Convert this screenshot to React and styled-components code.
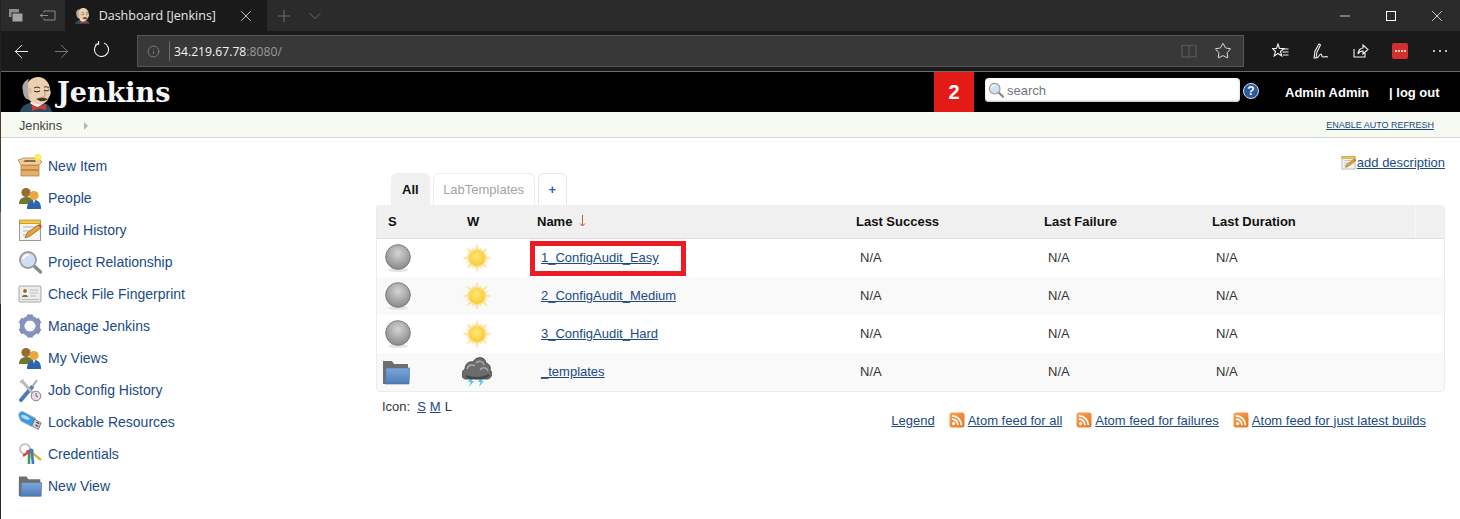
import React from "react";
import styled, { createGlobalStyle } from "styled-components";
import { ArrowLeft, ArrowRight, Info, Star, Plus, ChevronDown, X, Minus } from "lucide-react";

const GlobalStyle = createGlobalStyle`
  html, body { margin: 0; padding: 0; background: #fff; }
  body { font-family: "Liberation Sans", Arial, sans-serif; font-size: 13px; color: #333; }
`;

const Page = styled.div`
  width: 1460px;
  height: 519px;
  overflow: hidden;
  position: relative;
  background: #fff;
`;
// sliver of the desktop showing past the window's left edge
const WindowEdge = styled.div`
  position: absolute;
  left: 0;
  top: 0;
  bottom: 0;
  width: 1px;
  background: linear-gradient(
    to bottom,
    #222 0 72px,
    #4a3a2a 72px 177px,
    #1d4a70 177px 212px,
    #777 212px 304px,
    #2a2a2a 304px
  );
`;

// browser chrome
const TabStrip = styled.div`
  height: 31px;
  display: flex;
  align-items: stretch;
  background: #2b2b2b;
  color: #fff;
`;
const StripButton = styled.div`
  width: ${(p) => p.$w || 32}px;
  display: flex;
  align-items: center;
  justify-content: center;
  color: ${(p) => p.$color || "#fff"};
`;
const ActiveTab = styled.div`
  width: 202px;
  margin-left: 1px;
  background: #1a1a1a;
  display: flex;
  align-items: center;
  padding: 0 12px 0 10px;
  box-sizing: border-box;
  font: 12.5px "Open Sans", "Noto Sans", sans-serif;
  color: #e8e8e8;
`;
const TabTitle = styled.span`
  flex: 1;
  margin-left: 9px;
`;
const StripSpacer = styled.div`
  flex: 1;
`;
const Toolbar = styled.div`
  height: 40px;
  background: #1a1a1a;
  border-bottom: 1px solid #6a6a6a;
  display: flex;
  align-items: center;
`;
const NavButton = styled.div`
  width: 40px;
  display: flex;
  justify-content: center;
  color: ${(p) => p.$color || "#f2f2f2"};
`;
const NavGroup = styled.div`
  width: 137px;
  display: flex;
  padding-left: 1px;
  box-sizing: border-box;
`;
const AddressBar = styled.div`
  width: 1107px;
  height: 32px;
  box-sizing: border-box;
  background: #383838;
  border: 1px solid #565656;
  display: flex;
  align-items: center;
  font: 12.2px "Open Sans", "Noto Sans", sans-serif;
  color: #f4f4f4;
`;
const AddressInfo = styled.div`
  width: 31px;
  height: 20px;
  display: flex;
  align-items: center;
  justify-content: center;
  color: #9a9a9a;
  border-right: 1px solid #6a6a6a;
  margin-right: 4px;
`;
const PortText = styled.span`
  color: #9a9a9a;
`;
const AddressEnd = styled.div`
  margin-left: auto;
  display: flex;
  align-items: center;
  gap: 17px;
  padding-right: 11px;
`;
const ToolIcons = styled.div`
  flex: 1;
  display: flex;
  align-items: center;
  justify-content: space-between;
  padding: 0 12px 0 28px;
`;
const LastPass = styled.div`
  width: 16px;
  height: 16px;
  background: #d32f2f;
  border-radius: 2px;
  display: flex;
  align-items: center;
  justify-content: center;
  gap: 1px;
`;
const LastPassDot = styled.span`
  width: 2px;
  height: 2px;
  background: #fff;
  border-radius: 50%;
`;

// jenkins header
const Header = styled.header`
  height: 40px;
  background: #000;
  display: flex;
  align-items: stretch;
`;
const Brand = styled.div`
  width: 934px;
  display: flex;
  align-items: flex-end;
  padding-left: 20px;
  box-sizing: border-box;
`;
const Wordmark = styled.span`
  font: bold 27px "DejaVu Serif", serif;
  color: #f7f7f7;
  margin-left: 5px;
  align-self: center;
`;
const Badge = styled.div`
  width: 40px;
  background: #e31b17;
  color: #fff;
  font: bold 20px "Liberation Sans", sans-serif;
  display: flex;
  align-items: center;
  justify-content: center;
`;
const SearchBox = styled.div`
  width: 255px;
  height: 24px;
  margin: 6px 3px 0 11px;
  background: #fff;
  border-radius: 4px;
  box-shadow: inset 0 -1px 2px #bbb;
  display: flex;
  align-items: center;
  padding-left: 3px;
  box-sizing: border-box;
  font-size: 13px;
  color: #6f7680;
  gap: 3px;
`;
const HelpBubble = styled.div`
  width: 16px;
  height: 16px;
  margin-top: 11px;
  border-radius: 50%;
  background: #2d5a9e;
  border: 1px solid #cfe0f2;
  box-sizing: border-box;
  color: #fff;
  font: bold 12px/14px "Liberation Sans", sans-serif;
  text-align: center;
`;
const UserName = styled.span`
  margin-left: 26px;
  font: bold 13px/42px "Liberation Sans", sans-serif;
  color: #fff;
`;
const LogOut = styled.span`
  margin-left: 20px;
  font: bold 13px/42px "Liberation Sans", sans-serif;
  color: #fff;
`;

// breadcrumb
const Breadcrumbs = styled.div`
  height: 23px;
  background: #f6faf2;
  border-bottom: 1px solid #d3d7cf;
  display: flex;
  align-items: center;
  padding: 2px 26px 0 19px;
  font-size: 12.7px;
  color: #444;
`;
const CrumbArrow = styled.span`
  width: 0;
  height: 0;
  margin-left: 22px;
  border-left: 4px solid #b5b5b5;
  border-top: 4px solid transparent;
  border-bottom: 4px solid transparent;
`;
const AutoRefresh = styled.a`
  margin-left: auto;
  font-size: 9px;
  color: #204a87;
  text-decoration: underline;
  margin-bottom: 2px;
`;

// page body
const Body = styled.div`
  display: flex;
  align-items: flex-start;
`;
const Sidebar = styled.nav`
  width: 376px;
  padding: 12px 0 0 18px;
  box-sizing: border-box;
`;
const SideItem = styled.div`
  height: 32px;
  display: flex;
  align-items: center;
  gap: 6px;
  color: #204a87;
  font-size: 14px;
`;
const Main = styled.main`
  flex: 1;
  padding-right: 15px;
`;
const DescriptionRow = styled.div`
  height: 35px;
  padding-top: 13px;
  box-sizing: border-box;
  display: flex;
  justify-content: flex-end;
  align-items: center;
  gap: 1px;
`;
const Link = styled.a`
  color: #204a87;
  text-decoration: underline;
  font-size: 13px;
`;
const TabRow = styled.div`
  display: flex;
  gap: 3px;
  padding-left: 15px;
  height: 32px;
`;
const ViewTab = styled.div`
  height: 32px;
  box-sizing: border-box;
  padding: 0 ${(p) => p.$pad}px;
  display: flex;
  align-items: center;
  border-radius: 6px 6px 0 0;
  font-size: 13px;
  border: 1px solid ${(p) => p.$border};
  border-bottom: none;
  background: ${(p) => p.$bg || "#fff"};
  color: ${(p) => p.$color};
  font-weight: ${(p) => (p.$bold ? "bold" : "normal")};
`;
const Table = styled.div`
  position: relative;
  border: 1px solid #ececec;
  border-top: none;
  border-radius: 4px;
  height: 187px;
  box-sizing: border-box;
`;
const Row = styled.div`
  display: grid;
  grid-template-columns: 81px 75px 319px 188px 168px 207px 1fr;
  align-items: center;
  height: ${(p) => p.$h || 38}px;
  background: ${(p) => p.$bg};
  box-sizing: border-box;
  border-bottom: ${(p) => (p.$line ? "1px solid #dcdcdc" : "none")};
`;
const HeadCell = styled.div`
  font-weight: bold;
  font-size: 13px;
  color: #111;
  padding-left: ${(p) => p.$pad}px;
  display: flex;
  align-items: center;
  gap: 7px;
  margin-top: -1px;
`;
const HeadDivider = styled.div`
  height: 33px;
  border-left: 1px solid #f7f7f7;
`;
const Cell = styled.div`
  padding-left: ${(p) => p.$pad || 8}px;
  display: flex;
  align-items: center;
  color: #333;
  margin-top: -1px;
`;
const Highlight = styled.div`
  position: absolute;
  left: 153px;
  top: 36px;
  width: 156px;
  height: 35px;
  box-sizing: border-box;
  border: 5px solid #ed1c24;
`;
const BelowTable = styled.div`
  display: flex;
  justify-content: space-between;
  padding: 7px 19px 0 6px;
`;
const IconSizes = styled.div`
  font-size: 13px;
  display: flex;
  gap: 4px;
`;
const IconLabel = styled.span`
  margin-right: 3px;
`;
const Feeds = styled.div`
  display: flex;
  align-items: center;
  gap: 14px;
  padding-top: 13px;
`;
const Feed = styled.span`
  display: flex;
  align-items: center;
  gap: 3px;
`;

/* ---- drawings ---- */
const Butler = ({ size = 35 }) => (
  <svg width={(size * 32) / 35} height={size} viewBox="0 0 32 35" style={{ display: "block" }}>
    <path d="M0 35 C1 29 6 27 10 26 L24 26 C28 27 31 30 32 35Z" fill="#2d4a5f" />
    <path d="M10 26 L17 31 L24 26 L22 24 L12 24Z" fill="#eee" />
    <path d="M12 28 L18 30 L26 27 L26 33 L18 31.5 L12 34Z" fill="#d33833" />
    <path d="M6 14 C5 5 12 0 18 0 C25 0 30 6 30 13 C31 14 31 18 29 20 C27 26 22 28 17 27 C11 27 7 21 6 14Z" fill="#eccfae" />
    <path d="M3 14 C1 8 5 3 9 2 C7 6 9 9 8 13 C8 17 9 20 10 23 C6 23 3 19 3 14Z" fill="#a8a8a8" />
    <ellipse cx="9.5" cy="14" rx="2" ry="3" fill="#e0b998" />
    <path d="M14 11 Q17 9 20 11 M24 10 Q27 9 29 11" stroke="#4a3520" strokeWidth="1" fill="none" />
    <path d="M14 14 Q17 16 20 14 M24 13 Q27 15 29 13" stroke="#222" strokeWidth="1" fill="none" />
    <path d="M24 14 Q27 19 23 20" stroke="#bd9470" strokeWidth="1" fill="none" />
    <path d="M16 22 Q22 19 28 22 Q24 25 20 24Z" fill="#4a3520" />
  </svg>
);
const Sun = () => (
  <svg width="30" height="30" viewBox="0 0 30 30">
    <defs>
      <radialGradient id="sunFill" cx="45%" cy="40%" r="60%">
        <stop offset="0" stopColor="#ffe97a" />
        <stop offset="1" stopColor="#fac72e" />
      </radialGradient>
    </defs>
    {[0, 45, 90, 135, 180, 225, 270, 315, 22.5, 67.5, 112.5, 157.5, 202.5, 247.5, 292.5, 337.5].map((a, i) => (
      <path key={a} d={i < 8 ? "M12.8 7 L15 0 L17.2 7Z" : "M13.4 7 L15 3 L16.6 7Z"} fill="#fde3a8" transform={`rotate(${a} 15 15)`} />
    ))}
    <circle cx="15" cy="15" r="8.5" fill="url(#sunFill)" stroke="#f9e39c" strokeWidth="1" />
  </svg>
);
const Ball = () => (
  <svg width="28" height="30" viewBox="0 0 28 30">
    <defs>
      <radialGradient id="ballFill" cx="50%" cy="35%" r="60%">
        <stop offset="0" stopColor="#d4d4d4" />
        <stop offset="1" stopColor="#8f8f8f" />
      </radialGradient>
    </defs>
    <ellipse cx="14" cy="27" rx="10" ry="2" fill="#e4e4e4" />
    <circle cx="14" cy="14" r="12.3" fill="url(#ballFill)" stroke="#7c7c7c" strokeWidth="1" />
  </svg>
);
const Folder = ({ size = 28 }) => (
  <svg width={size} height={size} viewBox="0 0 28 28">
    <defs>
      <linearGradient id="folderFill" x1="0" y1="0" x2="0" y2="1">
        <stop offset="0" stopColor="#7da7d9" />
        <stop offset="1" stopColor="#4d7cb8" />
      </linearGradient>
    </defs>
    <path d="M1 3 L10 3 L12 6 L26 6 L26 26 L1 26Z" fill="#6f6f6f" />
    <path d="M4 10 L28 10 L27 26 L3 26Z" fill="url(#folderFill)" stroke="#4a6f9f" strokeWidth="0.6" />
  </svg>
);
const Storm = () => (
  <svg width="30" height="30" viewBox="0 0 30 30">
    <path d="M9 20 L6 25 L8.5 25 L7 30 L12 24 L9.5 24 L12 20Z" fill="#5ac8ee" />
    <path d="M19 20 L16 25 L18.5 25 L17 30 L22 24 L19.5 24 L22 20Z" fill="#5ac8ee" />
    <path d="M3 22 C-1 21 -1 14 3 12 C3 6 8 4 11 5 C14 -1 23 -1 24 6 C28 7 29 11 28 13 C31 15 30 21 26 22Z" fill="#6a6c6e" stroke="#3d3f41" strokeWidth="0.8" />
    <path d="M5 12 C6 8 10 7 13 9 M14 6 C17 3 21 4 22 8 M18 13 C20 10 25 10 26 14" stroke="#a9abad" strokeWidth="1.5" fill="none" />
    <path d="M4 19 C10 22 21 22 27 18" stroke="#44464a" strokeWidth="2.4" fill="none" />
  </svg>
);
const Rss = () => (
  <svg width="16" height="16" viewBox="0 0 16 16">
    <defs>
      <linearGradient id="rssFill" x1="0" y1="0" x2="1" y2="1">
        <stop offset="0" stopColor="#f7a65a" />
        <stop offset="1" stopColor="#e8711c" />
      </linearGradient>
    </defs>
    <rect x="0.5" y="0.5" width="15" height="15" rx="2.5" fill="url(#rssFill)" />
    <circle cx="4.6" cy="11.6" r="1.6" fill="#fff" />
    <path d="M3 7.2 A6 6 0 0 1 9 13.2 M3 3.8 A9.4 9.4 0 0 1 12.4 13.2" stroke="#fff" strokeWidth="1.8" fill="none" />
  </svg>
);
const NotePencil = ({ size = 15 }) => (
  <svg width={size} height={size} viewBox="0 0 24 24">
    <rect x="1.5" y="3" width="21" height="19.5" fill="#f4f4f0" stroke="#9a9a9a" />
    <rect x="1.5" y="2" width="21" height="3.5" fill="#f2c84b" stroke="#b99227" strokeWidth="0.8" />
    <path d="M5 9 H19 M5 13 H13 M5 17 H10" stroke="#b0b0b0" strokeWidth="1.2" />
    <path d="M7 20 L9 15 L20 7 L23 10 L12 18Z" fill="#e5a33a" stroke="#7a5b1e" strokeWidth="0.7" />
    <path d="M20 7 L23 10 L24 8 L22 6Z" fill="#d9453a" />
  </svg>
);
const Magnifier = ({ size = 24 }) => (
  <svg width={size} height={size} viewBox="0 0 24 24">
    <path d="M15 15 L22.5 22" stroke="#8b8b8b" strokeWidth="3.4" strokeLinecap="round" />
    <circle cx="10" cy="10" r="8" fill="#cfe0f2" stroke="#9c9c9c" strokeWidth="1.8" />
    <path d="M5 9 A5 5 0 0 1 11 5" stroke="#fff" strokeWidth="1.6" fill="none" />
  </svg>
);
const NewItemIcon = () => (
  <svg width="24" height="24" viewBox="0 0 24 24">
    <path d="M3 11 L21 11 L21 22 L3 22Z" fill="#e3b06c" stroke="#a9783c" strokeWidth="0.7" />
    <path d="M3 11 L0 6 L6 4 L20 4 L24 8 L21 11Z" fill="#f0cf9c" stroke="#a9783c" strokeWidth="0.7" />
    <path d="M5 8 L18 8 L17 6 L7 6Z" fill="#8b6b3f" />
    <rect x="3" y="15" width="18" height="2" fill="#c48a47" />
    <circle cx="20" cy="3.2" r="3" fill="#fff25c" stroke="#f0dc35" strokeWidth="0.6" />
  </svg>
);
const PeopleIcon = () => (
  <svg width="24" height="24" viewBox="0 0 24 24">
    <path d="M1 18 C1 12 5 11 9 11 C14 11 15 14 15 18Z" fill="#6d7a2e" />
    <circle cx="8" cy="6.5" r="4.6" fill="#9c6a2b" />
    <path d="M9 23 C9 16 12 14 16 14 C20 14 23 16 23 23Z" fill="#2e65a6" />
    <path d="M15 14 L16 18 L17 14Z" fill="#fff" />
    <circle cx="16" cy="9.5" r="4.6" fill="#eca53e" />
  </svg>
);
const Fingerprint = () => (
  <svg width="24" height="24" viewBox="0 0 24 24">
    <rect x="1" y="4" width="22" height="16" rx="1" fill="#ececec" stroke="#a7a7a7" />
    <rect x="4" y="7" width="6" height="8" fill="#fbfbf4" />
    <circle cx="7" cy="9" r="2" fill="#9c6a2b" />
    <path d="M4 15 C4 12 10 12 10 15Z" fill="#6d7a2e" />
    <path d="M12 8 H20 M12 11 H20 M12 14 H18 M3 17.5 H21" stroke="#b6b6b6" strokeWidth="0.9" />
  </svg>
);
const Gear = () => (
  <svg width="24" height="24" viewBox="0 0 24 24">
    {[0, 60, 120, 180, 240, 300].map((a) => (
      <rect key={a} x="9.2" y="0.5" width="5.6" height="6" fill="#7b8ab5" transform={`rotate(${a} 12 12)`} />
    ))}
    <circle cx="12" cy="12" r="8" fill="none" stroke="#8593bd" strokeWidth="4.6" />
  </svg>
);
const Tools = () => (
  <svg width="24" height="24" viewBox="0 0 24 24">
    <path d="M3 22 L14 9" stroke="#4c7cb3" strokeWidth="4" strokeLinecap="round" />
    <path d="M19 2 L14 9" stroke="#a7a7a7" strokeWidth="2" />
    <path d="M4 3 L19 20" stroke="#b7b7b7" strokeWidth="2.8" />
    <path d="M6 1 A4 4 0 0 0 2 6 L4 3.5Z" fill="#b7b7b7" />
    <circle cx="18" cy="18" r="4.8" fill="#e7ddea" stroke="#8c7f8f" />
    <path d="M18 15 V18 L20 19" stroke="#6b5f6e" fill="none" />
  </svg>
);
const UsbStick = () => (
  <svg width="24" height="24" viewBox="0 0 26 24">
    <path d="M1 6 C0 2 3 0 6 1 L19 8 L15 17 L3 11Z" fill="#3e9ae0" stroke="#a9b7c4" />
    <ellipse cx="8" cy="7" rx="5" ry="2" fill="#a8dcf8" transform="rotate(25 8 7)" />
    <path d="M18 9 L25 13 L22 20 L15 16Z" fill="#d5d5d5" stroke="#555" strokeWidth="0.8" />
    <path d="M20 12 L23 14 M19 15 L22 17" stroke="#333" strokeWidth="1.2" />
  </svg>
);
const KeysIcon = () => (
  <svg width="24" height="24" viewBox="0 0 24 24">
    <circle cx="7" cy="7" r="5" fill="none" stroke="#b9b9b9" strokeWidth="1.6" />
    <path d="M11 11 L16 20" stroke="#e5c44f" strokeWidth="2.4" />
    <path d="M12 9 L23 18" stroke="#d9b23a" strokeWidth="2.4" />
    <path d="M9 11 L5 14" stroke="#d9453a" strokeWidth="2.4" />
    <path d="M11 11 L11 22" stroke="#3f9e58" strokeWidth="2.6" />
    <path d="M14 10 L15 22" stroke="#3f7fc1" strokeWidth="2.6" />
    <circle cx="13" cy="9" r="2.6" fill="#3f7fc1" />
    <circle cx="10" cy="10" r="2" fill="#d9453a" />
  </svg>
);
const SortArrow = () => (
  <svg width="7" height="12" viewBox="0 0 7 12" fill="none" stroke="#c0603a" strokeWidth="1">
    <path d="M3.5 0 V11 M1 8.5 L3.5 11 L6 8.5" />
  </svg>
);
const WinIcon = ({ children }) => (
  <svg width="16" height="16" viewBox="0 0 16 16" fill="none" stroke="currentColor" strokeWidth="1">{children}</svg>
);

const sideItems = [
  ["New Item", <NewItemIcon />],
  ["People", <PeopleIcon />],
  ["Build History", <NotePencil size={24} />],
  ["Project Relationship", <Magnifier />],
  ["Check File Fingerprint", <Fingerprint />],
  ["Manage Jenkins", <Gear />],
  ["My Views", <PeopleIcon />],
  ["Job Config History", <Tools />],
  ["Lockable Resources", <UsbStick />],
  ["Credentials", <KeysIcon />],
  ["New View", <Folder size={24} />],
];

const jobs = [
  { name: "1_ConfigAudit_Easy", status: <Ball />, pad: 7, weather: <Sun />, bg: "#fff" },
  { name: "2_ConfigAudit_Medium", status: <Ball />, pad: 7, weather: <Sun />, bg: "#f9f9f9" },
  { name: "3_ConfigAudit_Hard", status: <Ball />, pad: 7, weather: <Sun />, bg: "#fff" },
  { name: "_templates", status: <Folder />, pad: 5, weather: <Storm />, bg: "#f9f9f9" },
];

export default function App() {
  return (
    <Page>
      <GlobalStyle />
      <TabStrip>
        <StripButton>
          <WinIcon>
            <rect x="1" y="1" width="10" height="8" fill="#8d8d8d" stroke="none" />
            <rect x="4" y="5" width="11" height="9" fill="#a4a4a4" stroke="#2b2b2b" />
          </WinIcon>
        </StripButton>
        <StripButton $color="#8d8d8d">
          <WinIcon>
            <path d="M4 4.5 V3 H15 V12 H4 V10.5 M0 7.5 H8 M2.5 5.5 L0.5 7.5 L2.5 9.5" />
          </WinIcon>
        </StripButton>
        <ActiveTab>
          <Butler size={16} />
          <TabTitle>Dashboard [Jenkins]</TabTitle>
          <X size={18} strokeWidth={1.1} />
        </ActiveTab>
        <StripButton $w={34} $color="#7a7a7a"><Plus size={20} strokeWidth={1} /></StripButton>
        <StripButton $w={28} $color="#7a7a7a"><ChevronDown size={20} strokeWidth={1} /></StripButton>
        <StripSpacer />
        <StripButton $w={46}><Minus size={16} strokeWidth={1.1} /></StripButton>
        <StripButton $w={46}>
          <svg width="10" height="10" viewBox="0 0 10 10" fill="none" stroke="#fff"><rect x="0.5" y="0.5" width="9" height="9" /></svg>
        </StripButton>
        <StripButton $w={46}><X size={18} strokeWidth={1} /></StripButton>
      </TabStrip>
      <Toolbar>
        <NavGroup>
          <NavButton><ArrowLeft size={21} strokeWidth={1.1} /></NavButton>
          <NavButton $color="#7a7a7a"><ArrowRight size={21} strokeWidth={1.1} /></NavButton>
          <NavButton>
            <svg width="16" height="16" viewBox="0 0 16 16" fill="none" stroke="#f2f2f2" strokeWidth="1.1">
              <path d="M5.5 2.2 A7 7 0 1 0 11 2 M5.6 0 V3.2 H2.4" />
            </svg>
          </NavButton>
        </NavGroup>
        <AddressBar>
          <AddressInfo><Info size={13} strokeWidth={1.2} /></AddressInfo>
          34.219.67.78<PortText>:8080/</PortText>
          <AddressEnd>
            <svg width="16" height="15" viewBox="0 0 16 15" fill="none" stroke="#5f5f5f" strokeWidth="1">
              <path d="M8 2 C6 1 3 1 1 1.5 V13 C3 12.5 6 12.5 8 13.5 C10 12.5 13 12.5 15 13 V1.5 C13 1 10 1 8 2Z M8 2 V13.5" />
            </svg>
            <Star size={18} strokeWidth={1.2} color="#f2f2f2" />
          </AddressEnd>
        </AddressBar>
        <ToolIcons>
          <svg width="17" height="16" viewBox="0 0 17 16" fill="none" stroke="#f2f2f2" strokeWidth="1.1">
            <path d="M6 1 L7.5 5.5 L12 5.5 L8.5 8.5 L9.8 13 L6 10.5 L2.2 13 L3.5 8.5 L0.5 5.5 L4.5 5.5Z" />
            <path d="M10 6 H16.5 M10.5 9 H16.5 M11 12 H16.5" />
          </svg>
          <svg width="16" height="16" viewBox="0 0 16 16" fill="none" stroke="#f2f2f2" strokeWidth="1.1">
            <path d="M1 15 L2 8 L6 1 L7.5 2 L4 9 L3 15Z M3 15 C6 15 6 11 8 11 C9 11 8 14 10 14 C12 14 12 13 15 14" />
          </svg>
          <svg width="16" height="16" viewBox="0 0 16 16" fill="none" stroke="#f2f2f2" strokeWidth="1.1">
            <path d="M1 6 V14 H12 V10 M5 11 C5 7 8 5 10 5 V2 L15 6.5 L10 11 V8 C8 8 6 9 5 11Z" />
          </svg>
          <LastPass>
            <LastPassDot /><LastPassDot /><LastPassDot /><LastPassDot />
          </LastPass>
          <svg width="16" height="4" viewBox="0 0 16 4" fill="#f2f2f2">
            <circle cx="2" cy="2" r="1" /><circle cx="8" cy="2" r="1" /><circle cx="14" cy="2" r="1" />
          </svg>
        </ToolIcons>
      </Toolbar>

      <Header>
        <Brand>
          <Butler size={35} />
          <Wordmark>Jenkins</Wordmark>
        </Brand>
        <Badge>2</Badge>
        <SearchBox>
          <Magnifier size={16} />
          search
        </SearchBox>
        <HelpBubble>?</HelpBubble>
        <UserName>Admin Admin</UserName>
        <LogOut>| log out</LogOut>
      </Header>
      <Breadcrumbs>
        Jenkins
        <CrumbArrow />
        <AutoRefresh>ENABLE AUTO REFRESH</AutoRefresh>
      </Breadcrumbs>

      <Body>
        <Sidebar>
          {sideItems.map(([label, icon]) => (
            <SideItem key={label}>
              {icon}
              {label}
            </SideItem>
          ))}
        </Sidebar>
        <Main>
          <DescriptionRow>
            <NotePencil />
            <Link>add description</Link>
          </DescriptionRow>
          <TabRow>
            <ViewTab $pad={10} $bg="#f0f0f0" $border="#f0f0f0" $color="#111" $bold>All</ViewTab>
            <ViewTab $pad={9.5} $border="#eeeeee" $color="#a3a3a3">LabTemplates</ViewTab>
            <ViewTab $pad={10} $border="#dbe9f7" $color="#2a62c4" $bold>+</ViewTab>
          </TabRow>
          <Table>
            <Row $h={34} $bg="#f0f0f0" $line>
              <HeadCell $pad={11}>S</HeadCell>
              <HeadCell $pad={9}>W</HeadCell>
              <HeadCell $pad={4}>Name <SortArrow /></HeadCell>
              <HeadCell $pad={4}>Last Success</HeadCell>
              <HeadCell $pad={4}>Last Failure</HeadCell>
              <HeadCell $pad={4}>Last Duration</HeadCell>
              <HeadDivider />
            </Row>
            {jobs.map((job) => (
              <Row key={job.name} $bg={job.bg}>
                <Cell $pad={job.pad}>{job.status}</Cell>
                <Cell $pad={4}>{job.weather}</Cell>
                <Cell><Link>{job.name}</Link></Cell>
                <Cell>N/A</Cell>
                <Cell>N/A</Cell>
                <Cell>N/A</Cell>
              </Row>
            ))}
            <Highlight />
          </Table>
          <BelowTable>
            <IconSizes>
              <IconLabel>Icon:</IconLabel>
              <Link>S</Link>
              <Link>M</Link>
              <span>L</span>
            </IconSizes>
            <Feeds>
              <Link>Legend</Link>
              <Feed><Rss /><Link>Atom feed for all</Link></Feed>
              <Feed><Rss /><Link>Atom feed for failures</Link></Feed>
              <Feed><Rss /><Link>Atom feed for just latest builds</Link></Feed>
            </Feeds>
          </BelowTable>
        </Main>
      </Body>
      <WindowEdge />
    </Page>
  );
}
